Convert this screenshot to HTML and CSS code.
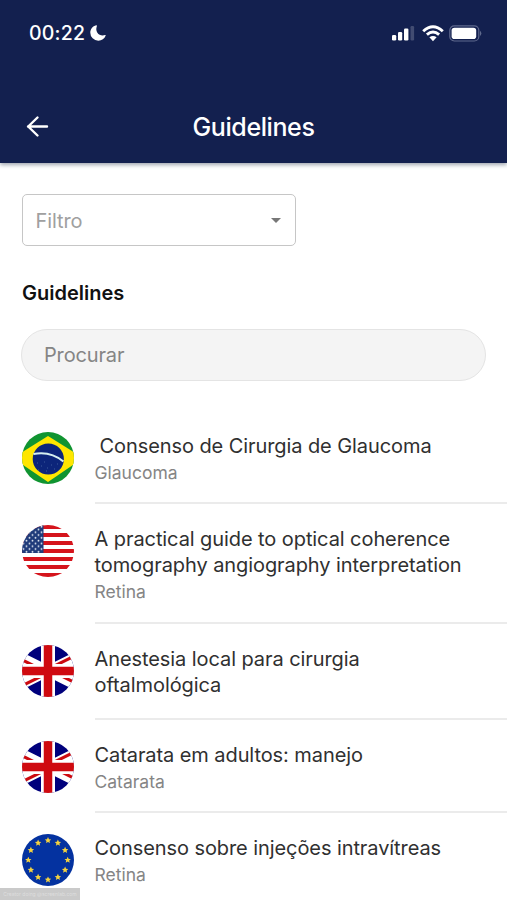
FILE: index.html
```html
<!DOCTYPE html>
<html lang="pt-BR">
<head>
<meta charset="utf-8">
<title>Guidelines</title>
<link rel="stylesheet" href="styles.css">
</head>
<body>
<svg class="defs" width="0" height="0" aria-hidden="true">
  <defs>
    <clipPath id="disc"><circle cx="26" cy="26" r="26"/></clipPath>
    <path id="star" d="M0-3.300 1-1.100 3.200-.9 1.500.6 2 2.800 0 1.600-2 2.800-1.500.6-3.200-.9-1-1.100Z"/>
    <pattern id="canton" width="6" height="5.6" patternUnits="userSpaceOnUse">
      <circle cx="1.5" cy="1.6" r=".95"/><circle cx="4.5" cy="4.4" r=".95"/>
    </pattern>
    <symbol id="flag-br" viewBox="0 0 52 52">
      <g clip-path="url(#disc)">
        <path fill="#109431" d="M0 0h52v52H0z"/>
        <path fill="#ffe600" d="M26 4 61 26 26 50-9 26Z"/>
        <circle cx="26.3" cy="27" r="15.6" fill="#0c257a"/>
        <path d="M11.400 22C22 20 33 22.500 41.400 29.500" fill="none" stroke="#d5efef" stroke-width="2.200"/>
        <path d="M15 31h1m3 3h1m2-4h1m2 6h1m3-3h1m2 4h1m2-5h1m-12 7h1m-9-1h1" stroke="#4a68a5" stroke-width=".8"/>
      </g>
    </symbol>
    <symbol id="flag-us" viewBox="0 0 52 52">
      <g clip-path="url(#disc)">
        <path fill="#fff" d="M0 0h52v52H0z"/>
        <path stroke="#d5141c" stroke-width="4" d="M0 2h52M0 10h52M0 18h52M0 26h52M0 34h52M0 42h52M0 50h52"/>
        <path fill="#1f3b7a" d="M0 0h21.500v28H0z"/>
        <path fill="url(#canton)" d="M0 0h21v28H0z"/>
      </g>
    </symbol>
    <symbol id="flag-gb" viewBox="0 0 52 52">
      <g clip-path="url(#disc)">
        <path fill="#00007c" d="M0 0h52v52H0z"/>
        <path stroke="#fff" stroke-width="10.400" d="M-26 0 78 52M78 0-26 52"/>
        <path stroke="#cc0a10" stroke-width="3" d="M26 27.800-26 1.800M26 24.200 78 50.200M26 24.200 78-1.800M26 27.800-26 53.800"/>
        <path stroke="#fff" stroke-width="14" d="M26 0v52M0 26h52"/>
        <path stroke="#cf0a10" stroke-width="8.500" d="M26 0v52M0 26h52"/>
      </g>
    </symbol>
    <symbol id="flag-eu" viewBox="0 0 52 52">
      <circle cx="26" cy="26" r="26" fill="#0432a0"/>
      <g fill="#f5d33f">
        <use href="#star" x="26" y="6.300"/><use href="#star" x="35.900" y="8.900"/><use href="#star" x="43.100" y="16.100"/>
        <use href="#star" x="45.700" y="26"/><use href="#star" x="43.100" y="35.900"/><use href="#star" x="35.900" y="43.100"/>
        <use href="#star" x="26" y="45.700"/><use href="#star" x="16.100" y="43.100"/><use href="#star" x="8.900" y="35.900"/>
        <use href="#star" x="6.300" y="26"/><use href="#star" x="8.900" y="16.100"/><use href="#star" x="16.100" y="8.900"/>
      </g>
    </symbol>
  </defs>
</svg>

<header class="header">
  <div class="status">
    <span class="clock">00:22</span>
    <svg class="moon" viewBox="0 0 16 16"><path fill="#fff" d="M6.200.3C2.600 1.200.3 4.200.3 7.700a8 8 0 0 0 8 8c3.500 0 6.200-1.900 7.400-5.200.1-.5-.2-.7-.6-.5C10 12 4.400 7.400 6.900 1 7 .5 6.700.2 6.200.3Z"/></svg>
    <div class="indicators">
      <svg width="24" height="16" viewBox="0 0 24 16" fill="#fff">
        <rect x="0" y="10" width="4.200" height="5.500" rx="1.200"/><rect x="6" y="7" width="4.200" height="8.500" rx="1.200"/>
        <rect x="12" y="3.500" width="4.400" height="12" rx="1.200"/><rect x="18.500" y="1" width="3.600" height="14.500" rx="1.200" opacity=".2"/>
      </svg>
      <svg width="22" height="17" viewBox="0 0 22 17" fill="none" stroke="#fff" stroke-width="2.900">
        <path d="M1.200 6.200Q11-2.800 20.800 6.200M4.900 9.700Q11 4.300 17.100 9.700"/>
        <path fill="#fff" stroke="none" d="M7.400 12.300Q11 9.600 14.600 12.300L11 16.200Z"/>
      </svg>
      <svg width="33" height="17" viewBox="0 0 33 17">
        <rect x=".8" y=".8" width="29" height="15.200" rx="4.500" fill="none" stroke="#5f688d" stroke-width="1.200"/>
        <rect x="2.600" y="2.700" width="24.600" height="11.400" rx="2.800" fill="#fff"/>
        <path fill="#737b9c" d="M31.200 5.800q2.200 2.600 0 5.200Z"/>
      </svg>
    </div>
  </div>
  <div class="toolbar">
    <svg class="back" width="24" height="24" viewBox="0 0 24 24" fill="none" stroke="#fff" stroke-width="2.400" stroke-linecap="round" stroke-linejoin="round"><path d="M21 11.500H2M11.500 2.500 2.200 11.500l9.300 9"/></svg>
    <h1 class="title">Guidelines</h1>
  </div>
</header>

<main class="content">
  <div class="filter"><span>Filtro</span><i class="caret"></i></div>
  <h2 class="heading">Guidelines</h2>
  <div class="search">Procurar</div>
</main>

<ul class="list">
  <li class="item">
    <svg class="flag"><use href="#flag-br"/></svg>
    <div class="text"><p class="name lead">Consenso de Cirurgia de Glaucoma</p><p class="topic">Glaucoma</p></div>
  </li>
  <li class="item">
    <svg class="flag"><use href="#flag-us"/></svg>
    <div class="text"><p class="name">A practical guide to optical coherence<br>tomography angiography interpretation</p><p class="topic">Retina</p></div>
  </li>
  <li class="item">
    <svg class="flag"><use href="#flag-gb"/></svg>
    <div class="text bare"><p class="name">Anestesia local para cirurgia<br>oftalmológica</p></div>
  </li>
  <li class="item">
    <svg class="flag"><use href="#flag-gb"/></svg>
    <div class="text"><p class="name">Catarata em adultos: manejo</p><p class="topic">Catarata</p></div>
  </li>
  <li class="item">
    <svg class="flag"><use href="#flag-eu"/></svg>
    <div class="text"><p class="name">Consenso sobre injeções intravítreas</p><p class="topic">Retina</p></div>
  </li>
</ul>
<div class="badge">Creator doing @screenlab.com</div>
</body>
</html>
```
FILE: styles.css
```css
* { box-sizing: border-box; }
body {
  margin: 0;
  height: 900px;
  overflow: hidden;
  position: relative;
  background: #fff;
  color: #303030;
  font-family: Inter, "Liberation Sans", sans-serif;
}
h1, h2, p, ul { margin: 0; padding: 0; }
.defs { position: absolute; }
#canton { fill: #dfe6f0; }

.header {
  height: 163px;
  background: #13204f;
  color: #fff;
  box-shadow: 0 2px 4px rgba(20, 35, 60, .4);
}
.status {
  display: flex;
  align-items: center;
  height: 66px;
  padding: 0 25px 0 29px;
}
.clock { font-size: 19.5px; font-weight: 500; letter-spacing: .2px; }
.moon { width: 16px; height: 16px; margin-left: 5px; }
.indicators {
  display: flex;
  align-items: center;
  gap: 5.5px;
  margin-left: auto;
}
.toolbar {
  display: grid;
  grid-template-columns: 24px 1fr 24px;
  align-items: center;
  height: 34px;
  margin-top: 44px;
  padding: 0 26px;
}
.back { margin-top: -1px; }
.title { text-align: center; font-size: 25px; font-weight: 500; line-height: 34px; letter-spacing: -.4px; }

.content { padding: 31px 21px 0; }
.filter {
  display: flex;
  align-items: center;
  justify-content: space-between;
  width: 274px;
  height: 52px;
  margin-left: .5px;
  padding: 1px 14px 0 13px;
  border: 1.500px solid #c6c6c6;
  border-radius: 5px;
  color: #a0a0a0;
  font-size: 20px;
  letter-spacing: -.1px;
}
.caret {
  border: 5px solid transparent;
  border-top-color: #777;
  border-bottom: 0;
}
.heading { margin: 34px 0 0 1px; color: #111; font-size: 20px; font-weight: 600; line-height: 26px; }
.search {
  display: flex;
  align-items: center;
  height: 52px;
  margin-top: 23px;
  padding-left: 22px;
  border: 1.500px solid #e4e4e4;
  border-radius: 26px;
  background: #f4f4f4;
  color: #858585;
  font-size: 20px;
  letter-spacing: -.15px;
}

.list { margin-top: 29.7px; list-style: none; }
.item { display: flex; gap: 21px; padding-left: 21.5px; }
.flag { width: 52px; height: 52px; margin-top: 21px; flex: none; }
.text { flex: 1; padding: 22px 0 16.500px; border-bottom: 2px solid #ebebeb; }
.bare { padding-bottom: 20px; }
.name { font-size: 20px; line-height: 26px; letter-spacing: -.08px; white-space: nowrap; }
.lead { padding-left: 5px; }
.topic { padding-top: 1px; color: #858585; font-size: 17.500px; line-height: 26px; }

.badge {
  position: absolute;
  left: 0;
  bottom: 0;
  width: 80px;
  height: 12px;
  background: rgba(196, 196, 196, .9);
  color: #dedede;
  font-size: 5px;
  line-height: 12px;
  text-align: center;
}
```
